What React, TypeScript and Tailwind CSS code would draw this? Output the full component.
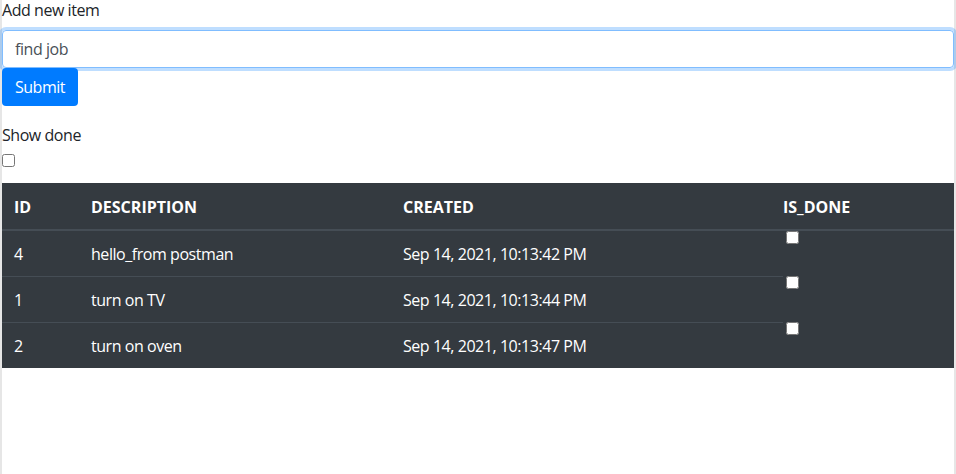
import React, { useState } from 'react';

interface Item {
  id: number;
  description: string;
  created: string;
  done: boolean;
}

const initialItems: Item[] = [
  { id: 4, description: 'hello_from postman', created: 'Sep 14, 2021, 10:13:42 PM', done: false },
  { id: 1, description: 'turn on TV', created: 'Sep 14, 2021, 10:13:44 PM', done: false },
  { id: 2, description: 'turn on oven', created: 'Sep 14, 2021, 10:13:47 PM', done: false },
];

const App: React.FC = () => {
  const [text, setText] = useState('find job');
  const [showDone, setShowDone] = useState(false);
  const [items, setItems] = useState<Item[]>(initialItems);

  const toggle = (id: number) =>
    setItems(items.map((it) => (it.id === id ? { ...it, done: !it.done } : it)));

  return (
    <div
      className="h-[474px] border-x-2 border-[#e6e6e6] bg-white text-[16px] tracking-[-0.45px] text-[#212529]"
      style={{ fontFamily: '"Open Sans", "Noto Sans", sans-serif' }}
    >
      <form onSubmit={(e) => e.preventDefault()}>
        <label className="block leading-[21px] mb-[9px]">Add new item</label>
        <input
          value={text}
          onChange={(e) => setText(e.target.value)}
          className="block w-full h-[38px] px-[12px] rounded-[4px] border border-[#80bdff] text-[#495057] leading-6 outline-none shadow-[0_0_0_3px_rgba(0,123,255,0.25)]"
        />
        <button
          type="submit"
          className="block h-[38px] w-[76px] rounded-[4px] bg-[#007bff] text-white leading-6"
        >
          Submit
        </button>
      </form>

      <div className="mt-[17px] leading-6">Show done</div>
      <input
        type="checkbox"
        checked={showDone}
        onChange={() => setShowDone(!showDone)}
        className="block m-0 mt-[7px] w-[13px] h-[13px]"
      />

      <table className="mt-[16px] w-full table-fixed border-separate border-spacing-0 bg-[#343a40] text-white">
        <colgroup>
          <col className="w-[77px]" />
          <col className="w-[312px]" />
          <col className="w-[392px]" />
          <col />
        </colgroup>
        <thead>
          <tr className="text-left font-bold tracking-normal">
            <th className="h-[48px] px-[12px] pt-[1px] leading-6 border-b-2 border-[#454d55] align-middle">ID</th>
            <th className="h-[48px] px-[12px] pt-[1px] leading-6 border-b-2 border-[#454d55] align-middle">DESCRIPTION</th>
            <th className="h-[48px] px-[12px] pt-[1px] leading-6 border-b-2 border-[#454d55] align-middle">CREATED</th>
            <th className="h-[48px] pl-0 pr-[12px] pt-[1px] leading-6 border-b-2 border-[#454d55] align-middle">IS_DONE</th>
          </tr>
        </thead>
        <tbody>
          {items.map((it, i) => {
            const cell = `px-[12px] leading-6 align-middle ${i > 0 ? 'h-[46px] border-t border-[#454d55]' : 'h-[45px]'}`;
            return (
              <tr key={it.id}>
                <td className={cell}>{it.id}</td>
                <td className={cell}>{it.description}</td>
                <td className={cell}>{it.created}</td>
                <td className="p-0 align-top">
                  <input
                    type="checkbox"
                    checked={it.done}
                    onChange={() => toggle(it.id)}
                    className="block m-0 ml-[3px] w-[13px] h-[13px]"
                  />
                </td>
              </tr>
            );
          })}
        </tbody>
      </table>
    </div>
  );
};

export default App;
